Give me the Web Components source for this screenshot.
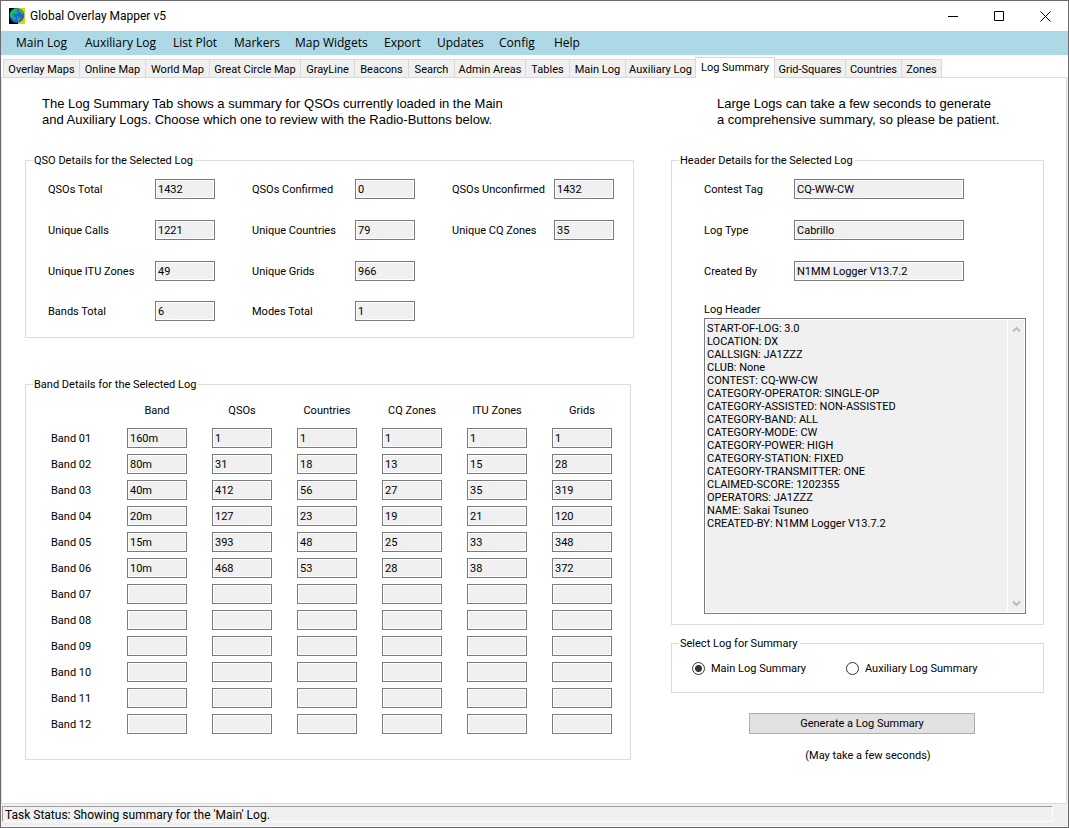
<!DOCTYPE html>
<html lang="en">
<head>
<meta charset="utf-8">
<title>Global Overlay Mapper v5</title>
<style>
html, body { height: 100%; margin: 0; }
body { font: 11px/13px Roboto, "Liberation Sans", Arial, sans-serif; color: #000; background: #fff; }
</style>
</head>
<body>
<app-window></app-window>
<script>
function define(name, html, setup) {
  const template = document.createElement('template');
  template.innerHTML = html;
  customElements.define(name, class extends HTMLElement {
    constructor() {
      super();
      this.attachShadow({ mode: 'open' }).append(template.content.cloneNode(true));
    }
    connectedCallback() {
      if (setup && !this.ready) setup(this, this.shadowRoot);
      this.ready = true;
    }
  });
}

const FIELD = `
  input { box-sizing: border-box; height: 20px; margin: 0; padding: 0 2px; border: 1px solid #7a7a7a;
    border-radius: 0; background: #f0f0f0; box-shadow: inset 0 0 0 1px #fff; font: inherit; color: inherit; outline: 0; }`;

define('title-bar', `
<style>
  :host { display: flex; align-items: center; height: 30px; padding-left: 8px; background: #fff;
    font: 12px/16px Roboto, "Noto Sans", sans-serif; }
  h1 { flex: 1; margin: 0 0 0 5px; font: inherit; }
  button { width: 46px; height: 30px; padding: 0; border: 0; background: none; }
  svg { display: block; margin: auto; }
</style>
<svg style="margin:0" width="16" height="16" viewBox="0 0 16 16" aria-hidden="true">
  <path fill="#000" d="M0 0h9v16H0z"/><path fill="#ded800" d="M9 0h7v16H9z"/>
  <circle cx="8" cy="7.5" r="7.3" fill="#2462dc"/>
  <path fill="#12bd63" d="M1 6C2 2 5 0 8.5.2L9 2 7 3l2 1-1 2-3-1-1 3 3 2-1 2-3-2-2-2zM10 1l3 1.600 1.500 3-2 1-1-2-2-1z"/>
  <path fill="#13a07e" d="M8 8l3 1 1 2-2 3-2-2z"/>
</svg>
<h1>Global Overlay Mapper v5</h1>
<button aria-label="Minimize"><svg width="11" height="11" fill="none" stroke="#000"><path d="M0 5.500h10"/></svg></button>
<button aria-label="Maximize"><svg width="11" height="11" fill="none" stroke="#000"><path d="M.5.500h9v9h-9z"/></svg></button>
<button aria-label="Close"><svg width="11" height="11" fill="none" stroke="#000"><path d="M.5.500l10 10M10.500.5l-10 10"/></svg></button>
`);

define('menu-bar', `
<style>
  :host { display: block; background: #add8e6; }
  nav { display: grid; grid-template-columns: 69px 88px 61px 61px 89px 53px 62px 55px 44px; padding-left: 15px; }
  button { height: 24px; padding: 0; border: 0; background: none; text-align: left; white-space: nowrap; color: #000;
    font: 12px/16px "Open Sans", "Noto Sans", sans-serif; }
</style>
<nav></nav>
`, (host, root) => {
  root.querySelector('nav').innerHTML = ['Main Log', 'Auxiliary Log', 'List Plot', 'Markers', 'Map Widgets', 'Export', 'Updates', 'Config', 'Help']
    .map(t => `<button>${t}</button>`).join('');
});

define('tab-strip', `
<style>
  :host { display: block; height: 22px; padding: 0 2px; position: relative; z-index: 1; }
  div { display: grid; grid-template-columns: 76px 66px 64px 91px 54px 54px 46px 71px 44px 56px 70px 80px 70px 56px 41px;
    align-items: end; height: 23px; }
  button { box-sizing: border-box; height: 19px; margin: 0; padding: 1px 0 0; border: 1px solid #d9d9d9; border-right-width: 0;
    background: #f0f0f0; font: inherit; color: #000; white-space: nowrap; }
  button:last-child, button[aria-selected=true] { border-right-width: 1px; }
  button[aria-selected=true] { height: 21px; padding-bottom: 3px; border-bottom: 0; background: #fff; }
  button[aria-selected=true] + button { border-left: 0; }
</style>
<div role="tablist"></div>
`, (host, root) => {
  root.querySelector('div').innerHTML = ['Overlay Maps', 'Online Map', 'World Map', 'Great Circle Map', 'GrayLine', 'Beacons', 'Search',
    'Admin Areas', 'Tables', 'Main Log', 'Auxiliary Log', 'Log Summary', 'Grid-Squares', 'Countries', 'Zones']
    .map(t => `<button role="tab" aria-selected="${t === 'Log Summary'}">${t}</button>`).join('');
});

define('group-box', `
<style>
  :host { display: block; }
  fieldset { box-sizing: border-box; height: 100%; min-width: 0; margin: 0; border: 1px solid #dcdcdc; padding: 0; }
  legend { margin-left: 7px; padding: 0 2px 0 1px; }
</style>
<fieldset><legend></legend><slot></slot></fieldset>
`, (host, root) => { root.querySelector('legend').textContent = host.getAttribute('caption'); });

define('value-field', `
<style>
  :host { display: flex; align-items: center; justify-content: space-between; height: 20px; }
  label { white-space: nowrap; }
  ${FIELD}
  input { width: var(--field, 60px); }
</style>
<label for="v"></label><input id="v" readonly>
`, (host, root) => {
  root.querySelector('label').textContent = host.getAttribute('label');
  root.querySelector('input').value = host.getAttribute('value');
});

define('band-table', `
<style>
  :host { display: block; }
  table { width: 561px; table-layout: fixed; border-collapse: collapse; }
  th, td { box-sizing: border-box; padding: 0 25px 0 0; font-weight: normal; }
  thead th { height: 34px; padding-top: 4px; white-space: nowrap; }
  tbody th { text-align: left; padding: 0; }
  th:last-child, td:last-child { padding-right: 0; }
  tbody tr { height: 26px; }
  ${FIELD}
  input { display: block; width: 100%; }
</style>
<table>
  <colgroup><col style="width:76px"><col style="width:85px"><col style="width:85px"><col style="width:85px"><col style="width:85px"><col style="width:85px"><col style="width:60px"></colgroup>
  <thead><tr><td></td><th>Band</th><th>QSOs</th><th>Countries</th><th>CQ Zones</th><th>ITU Zones</th><th>Grids</th></tr></thead>
  <tbody></tbody>
</table>
`, (host, root) => {
  const names = ['Band', 'QSOs', 'Countries', 'CQ Zones', 'ITU Zones', 'Grids'];
  const data = [['160m', 1, 1, 1, 1, 1], ['80m', 31, 18, 13, 15, 28], ['40m', 412, 56, 27, 35, 319],
    ['20m', 127, 23, 19, 21, 120], ['15m', 393, 48, 25, 33, 348], ['10m', 468, 53, 28, 38, 372]];
  root.querySelector('tbody').innerHTML = Array.from({ length: 12 }, (_, i) => {
    const band = 'Band ' + String(i + 1).padStart(2, '0');
    return `<tr><th scope="row">${band}</th>` + names.map((n, j) =>
      `<td><input readonly aria-label="${band} ${n}" value="${data[i] ? data[i][j] : ''}"></td>`).join('') + '</tr>';
  }).join('');
});

define('log-view', `
<style>
  :host { display: block; }
  label { display: block; margin-bottom: 2px; }
  .box { display: flex; box-sizing: border-box; height: 296px; border: 1px solid #7a7a7a; background: #f0f0f0; box-shadow: inset 0 0 0 1px #fff; }
  textarea { flex: 1; min-width: 0; margin: 1px 0; padding: 2px 2px 0; border: 0; border-right: 1px solid #fff; background: none;
    font: inherit; color: inherit; resize: none; overflow: hidden; white-space: pre; outline: 0; }
  .bar { display: flex; flex-direction: column; justify-content: space-between; width: 17px; padding: 7px 0 6px; align-items: center; }
  svg { fill: none; stroke: #bcbcbc; stroke-width: 2; }
</style>
<label for="t">Log Header</label>
<div class="box">
<textarea id="t" readonly>START-OF-LOG: 3.0
LOCATION: DX
CALLSIGN: JA1ZZZ
CLUB: None
CONTEST: CQ-WW-CW
CATEGORY-OPERATOR: SINGLE-OP
CATEGORY-ASSISTED: NON-ASSISTED
CATEGORY-BAND: ALL
CATEGORY-MODE: CW
CATEGORY-POWER: HIGH
CATEGORY-STATION: FIXED
CATEGORY-TRANSMITTER: ONE
CLAIMED-SCORE: 1202355
OPERATORS: JA1ZZZ
NAME: Sakai Tsuneo
CREATED-BY: N1MM Logger V13.7.2</textarea>
<div class="bar" aria-hidden="true">
  <svg width="9" height="7"><path d="M1 5.500l3.500-3.500L8 5.500"/></svg>
  <svg width="9" height="7"><path d="M1 1.500l3.500 3.500L8 1.500"/></svg>
</div>
</div>
`);

define('log-picker', `
<style>
  :host { display: grid; grid-template-columns: 154px 1fr; padding: 12px 0 0 20px; }
  label { display: flex; align-items: center; gap: 6px; white-space: nowrap; }
  input { appearance: none; box-sizing: border-box; width: 13px; height: 13px; margin: 0; border: 1px solid #333; border-radius: 50%; background: #fff; }
  input:checked { background: radial-gradient(circle, #333 3px, #fff 4px); }
</style>
<label><input type="radio" name="log" checked>Main Log Summary</label>
<label><input type="radio" name="log">Auxiliary Log Summary</label>
`);

define('generate-panel', `
<style>
  :host { display: block; width: 226px; margin: 20px 0 0 78px; }
  button { display: block; box-sizing: border-box; width: 100%; height: 21px; padding: 0; border: 1px solid #adadad; border-radius: 0;
    background: #e1e1e1; font: inherit; color: #000; }
  p { margin: 15px 0 0; padding-left: 12px; text-align: center; }
</style>
<button>Generate a Log Summary</button>
<p>(May take a few seconds)</p>
`);

define('status-bar', `
<style>
  :host { display: block; height: 20px; padding: 2px 15px 0 1px; background: #f0f0f0; border-bottom: 1px solid #fff; }
  output { display: block; box-sizing: border-box; height: 16px; padding-left: 2px; border: 1px solid #fff; border-top-color: #a0a0a0; border-left-color: #a0a0a0;
    font: 12px/16px Roboto, "Noto Sans", sans-serif; }
</style>
<output>Task Status: Showing summary for the 'Main' Log.</output>
`);

define('summary-page', `
<style>
  :host { display: grid; grid-template-columns: minmax(0, 609fr) minmax(0, 373fr); column-gap: 37px; align-content: start;
    padding: 18px 22px 0 23px; border: 1px solid #dcdcdc; background: #fff; }
  p { margin: 0 0 26px; font: 13px/16px "Liberation Sans", Arial, sans-serif; white-space: nowrap; }
  .left p { padding-left: 17px; }
  .right p { padding-left: 46px; }
  .qso { height: 184px; }
  .totals { display: grid; grid-template-columns: 167px 163px 162px; grid-template-rows: 41px 41px 40px 20px; column-gap: 37px; padding: 12px 0 0 22px; }
  .bands { height: 382px; margin: 40px 3px 0 0; }
  band-table { padding-left: 25px; }
  .header { height: 471px; --field: 170px; }
  .tags { display: grid; grid-template-columns: 260px; row-gap: 21px; padding: 12px 0 0 32px; }
  log-view { margin: 22px 17px 0 32px; }
  .pick { height: 56px; margin-top: 12px; }
</style>
<div class="left">
  <p>The Log Summary Tab shows a summary for QSOs currently loaded in the Main<br>and Auxiliary Logs. Choose which one to review with the Radio-Buttons below.</p>
  <group-box class="qso" caption="QSO Details for the Selected Log">
    <div class="totals">
      <value-field label="QSOs Total" value="1432"></value-field>
      <value-field label="QSOs Confirmed" value="0"></value-field>
      <value-field label="QSOs Unconfirmed" value="1432"></value-field>
      <value-field label="Unique Calls" value="1221"></value-field>
      <value-field label="Unique Countries" value="79"></value-field>
      <value-field label="Unique CQ Zones" value="35"></value-field>
      <value-field label="Unique ITU Zones" value="49"></value-field>
      <value-field label="Unique Grids" value="966"></value-field>
      <span></span>
      <value-field label="Bands Total" value="6"></value-field>
      <value-field label="Modes Total" value="1"></value-field>
    </div>
  </group-box>
  <group-box class="bands" caption="Band Details for the Selected Log"><band-table></band-table></group-box>
</div>
<div class="right">
  <p>Large Logs can take a few seconds to generate<br>a comprehensive summary, so please be patient.</p>
  <group-box class="header" caption="Header Details for the Selected Log">
    <div class="tags">
      <value-field label="Contest Tag" value="CQ-WW-CW"></value-field>
      <value-field label="Log Type" value="Cabrillo"></value-field>
      <value-field label="Created By" value="N1MM Logger V13.7.2"></value-field>
    </div>
    <log-view></log-view>
  </group-box>
  <group-box class="pick" caption="Select Log for Summary"><log-picker></log-picker></group-box>
  <generate-panel></generate-panel>
</div>
`);

define('app-window', `
<style>
  :host { display: flex; flex-direction: column; box-sizing: border-box; min-height: 100vh; border: 1px solid #6c6a6c; }
  main { flex: 1; display: grid; padding-right: 1px; background: #f0f0f0; }
</style>
<title-bar></title-bar>
<menu-bar></menu-bar>
<tab-strip></tab-strip>
<main><summary-page></summary-page></main>
<status-bar></status-bar>
`);
</script>
</body>
</html>
